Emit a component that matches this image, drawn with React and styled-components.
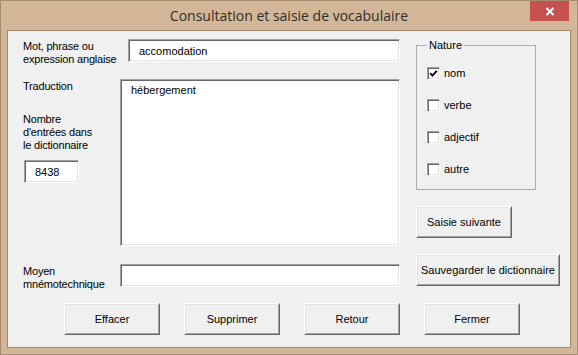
import styled, { createGlobalStyle } from "styled-components";

const GlobalStyle = createGlobalStyle`
  html, body {
    margin: 0;
    padding: 0;
    background: #d3b697;
  }
  * {
    box-sizing: border-box;
  }
`;

const natures = [
  { label: "nom", checked: true },
  { label: "verbe", checked: false },
  { label: "adjectif", checked: false },
  { label: "autre", checked: false },
];

const bottomButtons = ["Effacer", "Supprimer", "Retour", "Fermer"];

const App = () => {
  return (
    <>
      <GlobalStyle />
      <Window>
        <TitleBar>
          <span />
          <Title>Consultation et saisie de vocabulaire</Title>
          <CloseButton aria-label="Fermer">
            <svg width="10" height="9" viewBox="0 0 10 9">
              <path d="M1.5 1 L8.5 8 M8.5 1 L1.5 8" stroke="#fff" strokeWidth="2" />
            </svg>
          </CloseButton>
        </TitleBar>

        <Client>
          <Body>
            <FormGrid>
              <Label>
                Mot, phrase ou
                <br />
                expression anglaise
              </Label>
              <Field $inset={8} defaultValue="accomodation" />

              <LeftStack>
                <Label>Traduction</Label>
                <Label $top={19}>
                  Nombre
                  <br />
                  d'entrées dans
                  <br />
                  le dictionnaire
                </Label>
                <CountBox defaultValue="8438" />
              </LeftStack>
              <TextArea defaultValue="hébergement" />

              <Label>
                Moyen
                <br />
                mnémotechnique
              </Label>
              <Field $inset={0} defaultValue="" />
            </FormGrid>

            <Side>
              <GroupBox>
                <Legend>Nature</Legend>
                {natures.map((n) => (
                  <CheckRow key={n.label}>
                    <Box>
                      {n.checked && (
                        <svg width="9" height="9" viewBox="0 0 9 9">
                          <path
                            d="M1.2 4.2 L3.4 6.6 L7.8 1.8"
                            stroke="#000"
                            strokeWidth="1.8"
                            fill="none"
                          />
                        </svg>
                      )}
                    </Box>
                    {n.label}
                  </CheckRow>
                ))}
              </GroupBox>
              <Button $width={96}>Saisie suivante</Button>
              <Button $width={144}>Sauvegarder le dictionnaire</Button>
            </Side>
          </Body>

          <ButtonRow>
            {bottomButtons.map((b) => (
              <Button key={b} $width={96}>
                {b}
              </Button>
            ))}
          </ButtonRow>
        </Client>
      </Window>
    </>
  );
};

const Window = styled.div`
  width: 578px;
  height: 355px;
  border: 1px solid #a58b6e;
  background: #d3b697;
  display: flex;
  flex-direction: column;
`;

const TitleBar = styled.div`
  height: 29px;
  display: grid;
  grid-template-columns: 1fr auto 1fr;
  align-items: start;
`;

const Title = styled.div`
  font-family: "Open Sans", "Noto Sans", sans-serif;
  font-size: 14px;
  line-height: 29px;
  color: #2e2e2e;
  white-space: nowrap;
`;

const CloseButton = styled.button`
  justify-self: end;
  margin-right: 8px;
  width: 39px;
  height: 20px;
  border: none;
  padding: 0;
  background: #c75050;
  display: flex;
  align-items: center;
  justify-content: center;
`;

const Client = styled.div`
  flex: 1;
  margin: 0 6px 6px;
  border: 1px solid #a58b6e;
  background: #f0f0f0;
  font-family: "Liberation Sans", Arial, sans-serif;
  font-size: 11px;
  color: #000;
`;

const Body = styled.div`
  display: flex;
  padding: 8px 0 0 15px;
`;

const FormGrid = styled.div`
  display: grid;
  grid-template-columns: 97px 280px;
  grid-template-rows: 23px 168px 23px;
  row-gap: 17px;
`;

const Label = styled.div`
  line-height: 13px;
  margin-top: ${(p) => p.$top || 0}px;
  padding-top: 1px;
  white-space: nowrap;
  letter-spacing: -0.2px;
`;

const LeftStack = styled.div`
  display: flex;
  flex-direction: column;
  align-items: flex-start;
`;

const sunken = `
  border: 1px solid;
  border-color: #a0a0a0 #ffffff #ffffff #a0a0a0;
  box-shadow: inset 1px 1px #696969, inset -1px -1px #e3e3e3;
  background: #fff;
  font-family: "Liberation Sans", Arial, sans-serif;
  font-size: 11px;
  color: #000;
  outline: none;
`;

const Field = styled.input`
  ${sunken}
  height: 23px;
  margin-left: ${(p) => p.$inset}px;
  width: ${(p) => 280 - p.$inset}px;
  padding: 0 10px;
`;

const CountBox = styled.input`
  ${sunken}
  margin: 8px 0 0 1px;
  width: 55px;
  height: 23px;
  padding: 0 10px;
`;

const TextArea = styled.textarea`
  ${sunken}
  width: 280px;
  height: 167px;
  padding: 4px 10px;
  resize: none;
  line-height: 13px;
`;

const Side = styled.div`
  margin-left: 16px;
  display: flex;
  flex-direction: column;
  align-items: flex-start;
  gap: 16px;
`;

const GroupBox = styled.fieldset`
  margin: 0;
  width: 120px;
  border: 1px solid #adadad;
  padding: 15px 10px 13px;
  display: flex;
  flex-direction: column;
  gap: 19px;
`;

const Legend = styled.legend`
  padding: 0 2px;
  line-height: 13px;
`;

const CheckRow = styled.label`
  display: flex;
  align-items: center;
  gap: 4px;
  height: 13px;
  line-height: 13px;
`;

const Box = styled.span`
  width: 13px;
  height: 13px;
  border: 1px solid;
  border-color: #a0a0a0 #ffffff #ffffff #a0a0a0;
  box-shadow: inset 1px 1px #696969, inset -1px -1px #e3e3e3;
  background: #fff;
  display: flex;
  align-items: center;
  justify-content: center;
`;

const Button = styled.button`
  width: ${(p) => p.$width}px;
  height: 32px;
  padding: 0;
  border: 1px solid;
  border-color: #ffffff #696969 #696969 #ffffff;
  box-shadow: inset 1px 1px #e3e3e3, inset -1px -1px #a0a0a0;
  background: #f0f0f0;
  font-family: "Liberation Sans", Arial, sans-serif;
  font-size: 11px;
  color: #000;
`;

const ButtonRow = styled.div`
  display: flex;
  gap: 24px;
  padding-left: 56px;
  margin-top: 16px;
`;

export default App;
